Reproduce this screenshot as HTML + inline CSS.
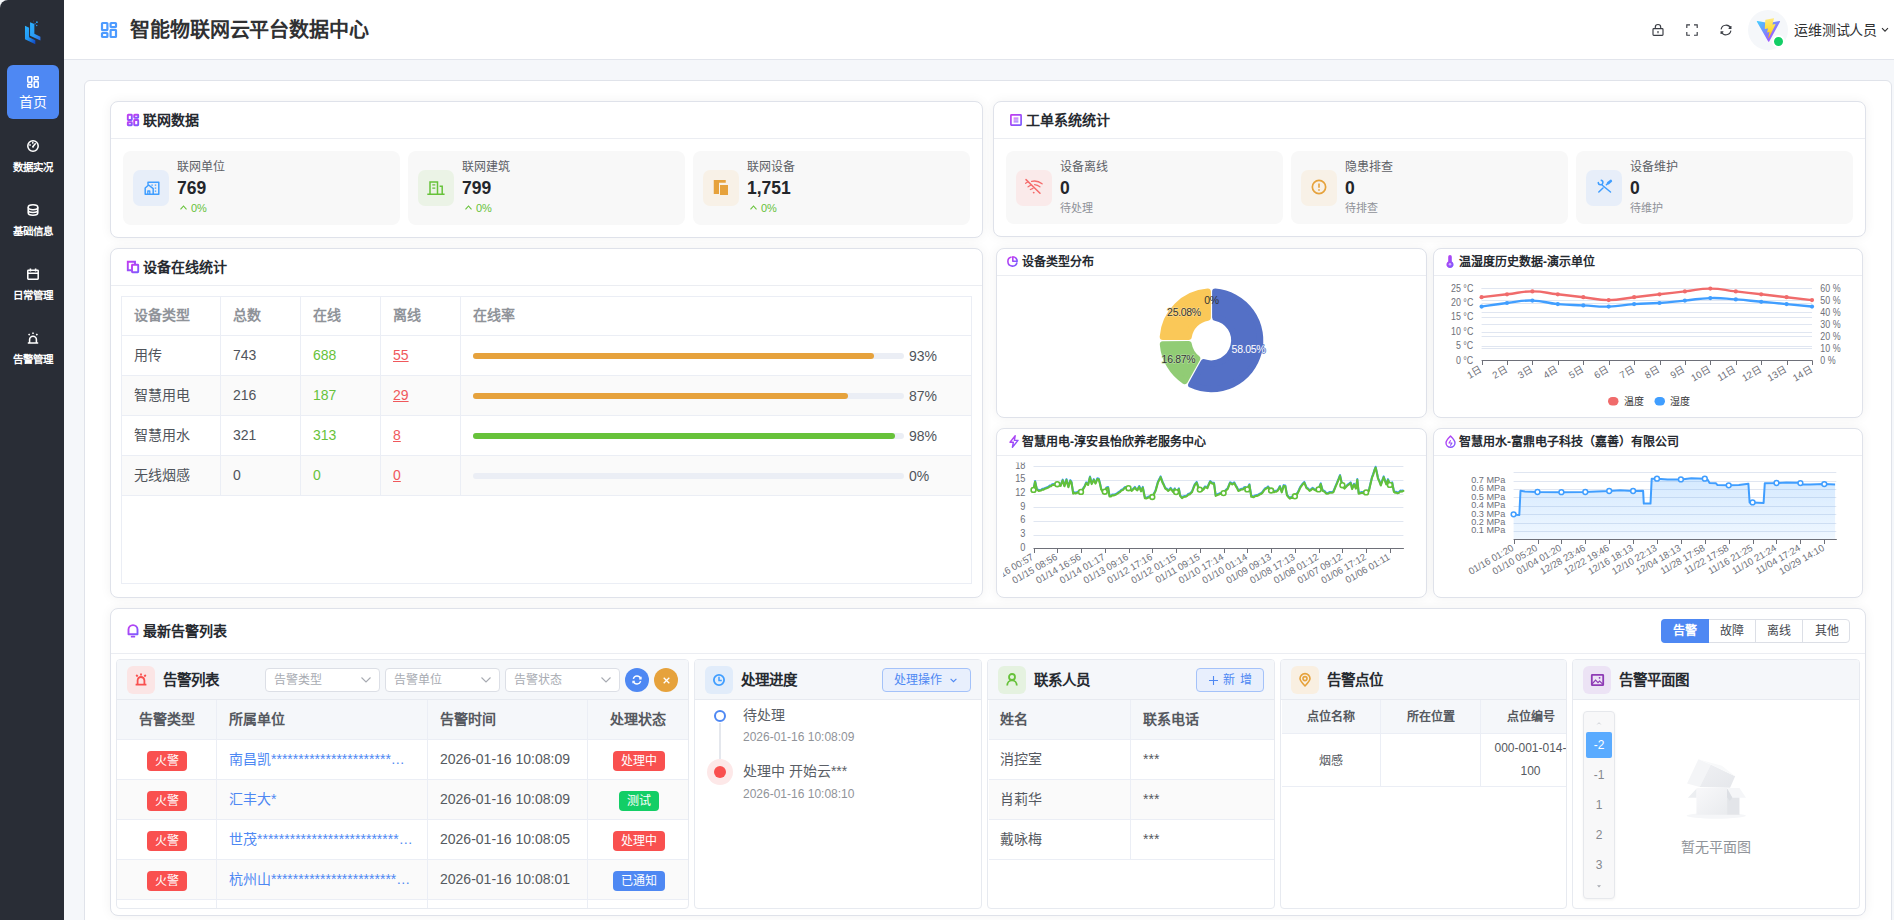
<!DOCTYPE html>
<html lang="zh-CN">
<head>
<meta charset="utf-8">
<title>智能物联网云平台数据中心</title>
<style>
*{box-sizing:border-box;margin:0;padding:0}
html,body{width:1894px;height:920px;overflow:hidden}
body{font-family:"Liberation Sans",sans-serif;background:#f5f7fa;position:relative;color:#303133;font-size:14px;line-height:1}
.a{position:absolute}
svg{display:block;overflow:visible}
/* sidebar */
#side{left:0;top:0;width:64px;height:920px;background:#292d36;border-top-left-radius:8px}
.mi{left:7px;width:52px;height:54px;border-radius:6px;color:#fff;text-align:center}
.mi svg{position:absolute;left:19px;top:9px}
.mi span{position:absolute;left:-6px;width:64px;top:29px;font-size:10.5px;font-weight:700;letter-spacing:-.1px;white-space:nowrap}
.mi.on{background:#4e88f3}
.mi.on span{font-size:14px;font-weight:400;top:29px;letter-spacing:0}
/* header */
#hd{left:64px;top:0;width:1830px;height:60px;background:#fff;border-bottom:1px solid #e2e5ec}
#ttl{left:66px;top:20px;font-size:20px;font-weight:700;color:#303133;white-space:nowrap;letter-spacing:-.1px}
/* outer */
#outer{left:84px;top:80px;width:1808px;height:860px;background:#fff;border:1px solid #e0e3ea;border-radius:6px}
.card{overflow:hidden;background:#fff;border:1px solid #dfe2ea;border-radius:8px;box-shadow:0 0 12px rgba(0,0,0,.055)}
.ch{left:0;top:0;right:0;border-bottom:1px solid #ebedf2}
.ct{font-weight:700;color:#262a30;white-space:nowrap}
/* stat boxes */
.sb{top:49px;width:277px;height:73px;background:#f8f8f8;border-radius:8px}
.sb .ic{left:10px;top:19px;width:36px;height:36px;border-radius:7px}
.sb .l1{left:54px;top:10px;font-size:12px;color:#5d6066;white-space:nowrap}
.sb .l2{left:54px;top:28.5px;font-size:17.5px;font-weight:700;color:#23262b;white-space:nowrap}
.sb .l3{left:54px;top:52px;font-size:11px;color:#8f9299;white-space:nowrap}
.sb .l3.g{color:#67c23a}
/* table1 */
#t1{left:10px;top:47px;width:851px;height:288px;border:1px solid #ebeef5}
#t1 .r{left:0;width:849px;height:40px;border-bottom:1px solid #ebeef5}
#t1 .r.s{background:#fafafa}
#t1 .c{top:0;height:39px;line-height:39px;padding-left:12px;font-size:14px;color:#50545b;border-right:1px solid #ebeef5;white-space:nowrap}
#t1 .h .c{color:#8f9399;font-weight:700}
#t1 .g{color:#67c23a}
#t1 .d{color:#f0585c;text-decoration:underline}
.pb{left:12px;top:17px;width:431px;height:6px;border-radius:3px;background:#ebeef5}
.pb i{position:absolute;left:0;top:0;height:6px;border-radius:3px}
.pt{left:448px;top:1px;font-size:14px;color:#50545b}
/* bottom panels */
.pn{top:51px;height:250px;background:#fff;border:1px solid #e7eaf0;border-radius:4px;overflow:hidden}
.ph{left:0;top:0;right:0;height:40px;background:#f5f7fa;border-bottom:1px solid #e7eaf0}
.ph .ic{left:10px;top:6px;width:28px;height:28px;border-radius:6px}
.ph .t{left:46px;top:13px;font-size:14.5px;font-weight:700;color:#262a30;white-space:nowrap}
.th{background:#f5f7fa;font-weight:700;color:#4a4e55}
.tc{position:absolute;height:40px;line-height:39px;border-right:1px solid #ebeef5;border-bottom:1px solid #ebeef5;font-size:14px;color:#555960;white-space:nowrap;overflow:hidden}
.tag{position:relative;top:.7px;display:inline-block;height:20px;line-height:20px;padding:0 7px;border-radius:4px;color:#fff;font-size:12px;vertical-align:middle}
.sel{top:8px;width:115px;height:24px;background:#fff;border:1px solid #dcdfe6;border-radius:4px;font-size:12px;color:#a8abb2;line-height:22px;padding-left:8px}
</style>
</head>
<body>
<div id="side" class="a">
<svg class="a" style="left:23.820px;top:20.100px" width="17.210" height="25.040" viewBox="200 140 440 640">
<defs><linearGradient id="lg1" x1="0" y1="0" x2="1" y2="1"><stop offset="0" stop-color="#2ab2ff"/><stop offset=".5" stop-color="#2196f3"/><stop offset="1" stop-color="#0f3fbc"/></linearGradient>
<linearGradient id="lg2" x1="0" y1="0" x2="1" y2="1"><stop offset="0" stop-color="#2bb0ff"/><stop offset=".55" stop-color="#2a9cf6"/><stop offset="1" stop-color="#2f6fe8"/></linearGradient></defs>
<path d="M225 285 L330 335 V580 L490 660 V760 L225 630 Z" fill="url(#lg1)"/>
<path d="M355 200 L465 245 V490 L620 570 V665 L355 545 Z" fill="url(#lg2)"/>
<circle cx="445" cy="165" r="12" fill="#2470d0"/><circle cx="530" cy="195" r="22" fill="#2aa8ff"/><circle cx="485" cy="235" r="17" fill="#2a78e0"/><circle cx="525" cy="280" r="18" fill="#2b9cf5"/>
</svg>
<div class="a mi on" style="top:65px"><svg width="12" height="12" viewBox="0 0 12 12" style="left:20px;top:11px" fill="none" stroke="#fff" stroke-width="1.55"><rect x=".8" y=".8" width="4" height="5.4" rx=".6"/><rect x=".8" y="8.3" width="4" height="2.9" rx=".6"/><rect x="7.2" y=".8" width="4" height="2.9" rx=".6"/><rect x="7.2" y="5.8" width="4" height="5.4" rx=".6"/></svg><span style="top:30px">首页</span></div>
<div class="a mi" style="top:129px"><svg width="12" height="12" viewBox="0 0 12 12" style="left:20px;top:11px" fill="none" stroke="#fff" stroke-width="1.55"><circle cx="6" cy="6" r="5.2"/><path d="M6 6.5 L8.3 3.8 M2.8 5 h.5 M5.8 2.6 v.5" stroke-linecap="round"/><circle cx="6" cy="6.8" r=".9" fill="#fff" stroke="none"/></svg><span style="top:33px">数据实况</span></div>
<div class="a mi" style="top:193px"><svg width="12" height="12" viewBox="0 0 12 12" style="left:20px;top:11px" fill="none" stroke="#fff" stroke-width="1.55"><ellipse cx="6" cy="3.2" rx="4.8" ry="2.5"/><path d="M1.2 3.2 v5.6 c0 1.4 2.1 2.5 4.8 2.5 s4.8-1.1 4.8-2.5 v-5.6 M1.2 6 c0 1.4 2.1 2.5 4.8 2.5 s4.8-1.1 4.8-2.5"/></svg><span style="top:33px">基础信息</span></div>
<div class="a mi" style="top:257px"><svg width="12" height="12" viewBox="0 0 12 12" style="left:20px;top:11px" fill="none" stroke="#fff" stroke-width="1.55"><rect x=".8" y="2.2" width="10.4" height="9" rx=".6"/><path d="M.8 5.2 h10.4 M3.4 .6 v2.8 M8.6 .6 v2.8"/></svg><span style="top:33px">日常管理</span></div>
<div class="a mi" style="top:321px"><svg width="12" height="12" viewBox="0 0 12 12" style="left:20px;top:11px" fill="none" stroke="#fff" stroke-width="1.55"><path d="M2.6 10.6 v-3 a3.4 3.4 0 0 1 6.8 0 v3 M.8 10.9 h10.4 M6 .5 v1.6 M1.6 2 l1.1 1.1 M10.4 2 l-1.1 1.1"/></svg><span style="top:33px">告警管理</span></div>
</div>

<div id="hd" class="a">
<svg class="a" style="left:37px;top:22px" width="16" height="16" viewBox="0 0 16 16" fill="none" stroke="#4d9bff" stroke-width="2.2"><rect x="1" y="1" width="5.4" height="7.2" rx=".6"/><rect x="1" y="11" width="5.4" height="4" rx=".6"/><rect x="9.6" y="1" width="5.4" height="4" rx=".6"/><rect x="9.6" y="7.8" width="5.4" height="7.2" rx=".6"/></svg>
<div id="ttl" class="a">智能物联网云平台数据中心</div>
<svg class="a" style="left:1588px;top:24px" width="12" height="12" viewBox="0 0 12 12" fill="none" stroke="#3a3d44" stroke-width="1.15"><rect x="1" y="4.6" width="10" height="6.8" rx=".8"/><path d="M3.3 4.6 v-1.4 a2.7 2.7 0 0 1 5.4 0 v1.4 M6 7 v2.2"/></svg>
<svg class="a" style="left:1622px;top:24px" width="12" height="12" viewBox="0 0 12 12" fill="none" stroke="#3a3d44" stroke-width="1.15"><path d="M.8 4 v-3.2 h3.2 M8 .8 h3.2 v3.2 M11.2 8 v3.2 h-3.2 M4 11.2 h-3.2 v-3.2"/></svg>
<svg class="a" style="left:1656px;top:24px" width="12" height="12" viewBox="0 0 12 12" fill="none" stroke="#3a3d44" stroke-width="1.15"><path d="M1.100 5.300 A5 5 0 0 1 10.600 4.200 M10.900 6.700 A5 5 0 0 1 1.400 7.800 M10.900 2 v2.300 h-2.300 M1.100 10 v-2.300 h2.300"/></svg>
<div class="a" style="left:1684px;top:10px;width:40px;height:40px;border-radius:20px;background:#f5f7fa"></div>
<svg class="a" style="left:1692px;top:18px" width="25" height="25" viewBox="0 0 25 25">
<defs><linearGradient id="vg1" x1="0" y1="0" x2="1" y2="1"><stop offset="0" stop-color="#41d1ff"/><stop offset="1" stop-color="#bd34fe"/></linearGradient>
<linearGradient id="vg2" x1="0" y1="0" x2="0" y2="1"><stop offset="0" stop-color="#ffea83"/><stop offset=".6" stop-color="#ffdd35"/><stop offset="1" stop-color="#ffa800"/></linearGradient></defs>
<path d="M24 3.8 L13.2 23.4 a.6.6 0 0 1-1 0 L.9 3.8 a.6.6 0 0 1 .6-.9 L12.5 4.9 L23.4 2.9 a.6.6 0 0 1 .6.9z" fill="url(#vg1)"/>
<path d="M17.6.2 L9.5 1.8 a.3.3 0 0 0-.2.3 l-.5 8.500 a.3.3 0 0 0 .4.3 l2.300-.5 a.3.3 0 0 1 .4.4 l-.7 3.300 a.3.3 0 0 0 .4.4 l1.400-.4 a.3.3 0 0 1 .4.4 l-1.100 5.200 c-.1.300.400.500.500.200 l.1-.2 6.600-13.200 a.3.3 0 0 0-.3-.4 l-2.400.5 a.3.3 0 0 1-.3-.4 L18 .6 a.3.3 0 0 0-.4-.4z" fill="url(#vg2)"/>
</svg>
<div class="a" style="left:1707.500px;top:34.500px;width:13px;height:13px;border-radius:7px;background:#13ce66;border:2px solid #fff"></div>
<div class="a" style="left:1730px;top:23px;font-size:14px;color:#303133;white-space:nowrap;letter-spacing:-.15px">运维测试人员</div>
<svg class="a" style="left:1817px;top:27px" width="8" height="6" viewBox="0 0 8 6" fill="none" stroke="#303133" stroke-width="1.1"><path d="M1 1.2 l3 3 l3-3"/></svg>
</div>

<div id="outer" class="a"></div>
<!-- card: 联网数据 -->
<div class="a card" style="left:110px;top:101px;width:873px;height:137px">
<div class="a ch" style="height:37px"></div>
<svg class="a" style="left:16px;top:12px" width="12" height="12" viewBox="0 0 12 12" fill="none" stroke-width="1.900"><defs><linearGradient id="pg" x1="0" y1="0" x2="1" y2="1"><stop offset="0" stop-color="#c33cf0"/><stop offset="1" stop-color="#7a5cff"/></linearGradient></defs><g stroke="url(#pg)"><rect x=".8" y=".8" width="4" height="5.2" rx=".5"/><rect x=".8" y="8.2" width="4" height="3" rx=".5"/><rect x="7.2" y=".8" width="4" height="3" rx=".5"/><rect x="7.2" y="6" width="4" height="5.2" rx=".5"/></g></svg>
<div class="a ct" style="left:32px;top:11px;font-size:14px">联网数据</div>
<div class="a sb" style="height:74px;left:12px"><div class="a ic" style="background:#e7eef9"></div>
<svg class="a" style="left:20.500px;top:29.500px" width="16" height="14" viewBox="0 0 16 14" fill="none" stroke="#409eff" stroke-width="1.500" stroke-linejoin="round"><path d="M4 3.800 V1.200 H14.800 V13.200 H1.200 V7 L4.600 4 L9.200 7.600 V13.200"/><path d="M3.800 13.200 V10 h2 V13.200" stroke-width="1.300"/><path d="M7.400 4.200 h1.400 M10.800 4.200 h1.400 M10.800 7.200 h1.400 M10.800 10.200 h1.400" stroke-width="1.200"/></svg>
<div class="a l1">联网单位</div><div class="a l2">769</div><div class="a l3 g"><svg class="a" style="left:3px;top:2px" width="7" height="5" viewBox="0 0 7 5" fill="none" stroke="#67c23a" stroke-width="1.1"><path d="M.5 4.300 l3-3.300 l3 3.300"/></svg><span style="margin-left:14px">0%</span></div></div>
<div class="a sb" style="height:74px;left:297px"><div class="a ic" style="background:#ebf3e6"></div>
<svg class="a" style="left:19px;top:29.500px" width="18" height="14" viewBox="0 0 18 14" fill="none" stroke="#67c23a" stroke-width="1.500"><path d="M3 13 V1 h7.500 V13 M.3 13.200 H17.600 M12.600 5.200 h2.600 V13"/><path d="M5.300 3.900 h3 M5.300 7.100 h3" stroke-width="1.300"/></svg>
<div class="a l1">联网建筑</div><div class="a l2">799</div><div class="a l3 g"><svg class="a" style="left:3px;top:2px" width="7" height="5" viewBox="0 0 7 5" fill="none" stroke="#67c23a" stroke-width="1.1"><path d="M.5 4.300 l3-3.300 l3 3.300"/></svg><span style="margin-left:14px">0%</span></div></div>
<div class="a sb" style="height:74px;left:582px"><div class="a ic" style="background:#f8f1e7"></div>
<svg class="a" style="left:20px;top:29px" width="16" height="16" viewBox="0 0 16 16" fill="#e6a23c"><path d="M.750 0 h12 v2.750 h-6.750 v11.250 h-5.250 z"/><rect x="7" y="5" width="8" height="10"/></svg>
<div class="a l1">联网设备</div><div class="a l2">1,751</div><div class="a l3 g"><svg class="a" style="left:3px;top:2px" width="7" height="5" viewBox="0 0 7 5" fill="none" stroke="#67c23a" stroke-width="1.1"><path d="M.5 4.300 l3-3.300 l3 3.300"/></svg><span style="margin-left:14px">0%</span></div></div>
</div>
<!-- card: 工单系统统计 -->
<div class="a card" style="left:993px;top:101px;width:873px;height:136px">
<div class="a ch" style="height:37px"></div>
<svg class="a" style="left:16px;top:12px" width="12" height="12" viewBox="0 0 12 12" fill="none" stroke="url(#pg)" stroke-width="1.700"><rect x=".9" y=".9" width="10.200" height="10.200" rx=".5"/><path d="M3.600 4.100 h4.800 M3.600 6 h4.800 M3.600 7.900 h4.800" stroke-width="1"/></svg>
<div class="a ct" style="left:32px;top:11px;font-size:14px">工单系统统计</div>
<div class="a sb" style="left:12px"><div class="a ic" style="background:#faeaea"></div>
<svg class="a" style="left:19px;top:28px" width="18" height="15" viewBox="0 0 18 15" fill="none" stroke="#f56c6c" stroke-width="1.300" stroke-linecap="round"><path d="M1 .6 L15 14.300" stroke-width="1.500"/><path d="M6.600 2.400 Q12.300 1 17.100 4.800 M.6 4.300 L2.600 3 M9.600 5.600 Q12.600 5.900 14.900 7.800 M3.100 7.800 L5.600 6.300 M5.400 10.500 L8 9.300"/><circle cx="8.700" cy="13.600" r=".95" fill="#f56c6c" stroke="none"/></svg>
<div class="a l1">设备离线</div><div class="a l2">0</div><div class="a l3">待处理</div></div>
<div class="a sb" style="left:297px"><div class="a ic" style="background:#f8f1e7"></div>
<svg class="a" style="left:19.750px;top:27.500px" width="16" height="16" viewBox="0 0 16 16" fill="none" stroke="#e6a23c" stroke-width="1.700"><circle cx="8" cy="8" r="6.650"/><path d="M8 4.600 v4.200 M8 10.300 v1.500" stroke-width="1.600"/></svg>
<div class="a l1">隐患排查</div><div class="a l2">0</div><div class="a l3">待排查</div></div>
<div class="a sb" style="left:582px"><div class="a ic" style="background:#e7eef9"></div>
<svg class="a" style="left:20.500px;top:28.500px" width="15" height="14" viewBox="0 0 15 14" fill="none" stroke="#409eff" stroke-width="1.500" stroke-linecap="round"><path d="M5 5 L13.500 12 M1.800 12 L6 8 M9.400 4.700 L11 3.300"/><path d="M11.200 3.100 L13.800 1" stroke-width="2.700"/><path d="M1.300 2.400 a2.300 2.300 0 1 0 2.900-2.200" /></svg>
<div class="a l1">设备维护</div><div class="a l2">0</div><div class="a l3">待维护</div></div>
</div>
<!-- card: 设备在线统计 -->
<div class="a card" style="left:110px;top:248px;width:873px;height:350px">
<div class="a ch" style="height:37px"></div>
<svg class="a" style="left:16px;top:12px" width="12" height="12" viewBox="0 0 12 12" fill="none" stroke="url(#pg)" stroke-width="1.900"><path d="M4.500 9.200 h-3.700 v-8.400 h7.200 v2.600"/><rect x="5" y="3.800" width="6.200" height="7.400" rx=".5"/></svg>
<div class="a ct" style="left:32px;top:11px;font-size:14px">设备在线统计</div>
<div id="t1" class="a">
<div class="a r h" style="top:0;height:39px"><div class="a c" style="left:0;width:99px;height:38px;line-height:36px">设备类型</div><div class="a c" style="left:99px;width:80px;height:38px;line-height:36px">总数</div><div class="a c" style="left:179px;width:80px;height:38px;line-height:36px">在线</div><div class="a c" style="left:259px;width:80px;height:38px;line-height:36px">离线</div><div class="a c" style="left:339px;width:510px;border-right:0;height:38px;line-height:36px">在线率</div></div>
<div class="a r" style="top:39px"><div class="a c" style="left:0;width:99px">用传</div><div class="a c" style="left:99px;width:80px">743</div><div class="a c g" style="left:179px;width:80px">688</div><div class="a c d" style="left:259px;width:80px">55</div><div class="a c" style="left:339px;width:510px;border-right:0;padding:0"><div class="a pb"><i style="width:401px;background:#e6a23c"></i></div><div class="a pt">93%</div></div></div>
<div class="a r s" style="top:79px"><div class="a c" style="left:0;width:99px">智慧用电</div><div class="a c" style="left:99px;width:80px">216</div><div class="a c g" style="left:179px;width:80px">187</div><div class="a c d" style="left:259px;width:80px">29</div><div class="a c" style="left:339px;width:510px;border-right:0;padding:0"><div class="a pb"><i style="width:375px;background:#e6a23c"></i></div><div class="a pt">87%</div></div></div>
<div class="a r" style="top:119px"><div class="a c" style="left:0;width:99px">智慧用水</div><div class="a c" style="left:99px;width:80px">321</div><div class="a c g" style="left:179px;width:80px">313</div><div class="a c d" style="left:259px;width:80px">8</div><div class="a c" style="left:339px;width:510px;border-right:0;padding:0"><div class="a pb"><i style="width:422px;background:#67c23a"></i></div><div class="a pt">98%</div></div></div>
<div class="a r s" style="top:159px"><div class="a c" style="left:0;width:99px">无线烟感</div><div class="a c" style="left:99px;width:80px">0</div><div class="a c g" style="left:179px;width:80px">0</div><div class="a c d" style="left:259px;width:80px">0</div><div class="a c" style="left:339px;width:510px;border-right:0;padding:0"><div class="a pb"></div><div class="a pt">0%</div></div></div>
</div>
</div>
<div class="a card" style="left:996px;top:248px;width:431px;height:170px"><div class="a ch" style="height:27px"></div><svg class="a" style="left:10.300px;top:6.500px" width="11" height="11" viewBox="0 0 11 11" fill="none" stroke="url(#pg)" stroke-width="1.600"><path d="M10 6.400 a4.600 4.600 0 1 1 -5.400-5.400"/><path d="M5.800 .8 a4.400 4.400 0 0 1 4.400 4.400 h-4.400 z" stroke-linejoin="round"/></svg><div class="a ct" style="left:25px;top:6.500px;font-size:12px">设备类型分布</div><svg class="a" style="left:-1px;top:-1px" width="431" height="170" viewBox="996 248 431 170" font-family="Liberation Sans, sans-serif"><path d="M1215.3 291.8 A48.7 48.7 0 1 1 1191.3 384.7 L1203.7 362.3 A23.2 23.2 0 1 0 1215.3 317.5 Z" fill="#5470c6" stroke="#5470c6" stroke-width="6.4" stroke-linejoin="round"/><path d="M1184.7 381 A48.7 48.7 0 0 1 1163 344.4 L1188.6 344.3 A23.2 23.2 0 0 0 1197.1 358.6 Z" fill="#91cc75" stroke="#91cc75" stroke-width="6.4" stroke-linejoin="round"/><path d="M1162.9 336.8 A48.7 48.7 0 0 1 1207.7 291.8 L1207.7 317.5 A23.2 23.2 0 0 0 1188.6 336.7 Z" fill="#fac858" stroke="#fac858" stroke-width="6.4" stroke-linejoin="round"/><g font-size="10.5" text-anchor="middle" letter-spacing="-.3"><text x="1248.500" y="352.800" fill="#fff" stroke="#5470c6" stroke-width="1.600" paint-order="stroke" stroke-linejoin="round">58.05%</text><text x="1178.500" y="362.600" fill="#333" stroke="#b7e0a5" stroke-width="1.200" paint-order="stroke">16.87%</text><text x="1184" y="315.800" fill="#333" stroke="#fcdc92" stroke-width="1.200" paint-order="stroke">25.08%</text><text x="1211.500" y="303.800" fill="#333">0%</text></g></svg></div>
<div class="a card" style="left:1433px;top:248px;width:430px;height:170px"><div class="a ch" style="height:27px"></div><svg class="a" style="left:12px;top:6px" width="8" height="13" viewBox="0 0 8 13"><path d="M2.200 1.800 a1.800 1.800 0 0 1 3.600 0 v4.600 a3.600 3.600 0 1 1 -3.600 0 z" fill="url(#pg)"/><circle cx="4" cy="9.300" r="1.300" fill="#fff" opacity=".55"/></svg><div class="a ct" style="left:25px;top:6.500px;font-size:12px">温湿度历史数据-演示单位</div><svg class="a" style="left:-1px;top:-1px" width="430" height="170" viewBox="1433 248 430 170" font-family="Liberation Sans, sans-serif"><path d="M1481.6 288.5 H1812" stroke="#e0e6f1" stroke-width="1"/><path d="M1481.6 288.5 H1812" stroke="#e0e6f1" stroke-width="1"/><path d="M1481.6 300.5 H1812" stroke="#e0e6f1" stroke-width="1"/><path d="M1481.6 303.5 H1812" stroke="#e0e6f1" stroke-width="1"/><path d="M1481.6 312.5 H1812" stroke="#e0e6f1" stroke-width="1"/><path d="M1481.6 317.5 H1812" stroke="#e0e6f1" stroke-width="1"/><path d="M1481.6 324.5 H1812" stroke="#e0e6f1" stroke-width="1"/><path d="M1481.6 332.5 H1812" stroke="#e0e6f1" stroke-width="1"/><path d="M1481.6 336.5 H1812" stroke="#e0e6f1" stroke-width="1"/><path d="M1481.6 346.5 H1812" stroke="#e0e6f1" stroke-width="1"/><path d="M1481.6 348.5 H1812" stroke="#e0e6f1" stroke-width="1"/><path d="M1481.6 360.5 H1812.5" stroke="#6e7079" stroke-width="1"/><g stroke="#6e7079" stroke-width="1"><path d="M1482.5 360.5 v4.5"/><path d="M1507.5 360.5 v4.5"/><path d="M1532.5 360.5 v4.5"/><path d="M1558.5 360.5 v4.5"/><path d="M1583.5 360.5 v4.5"/><path d="M1609.5 360.5 v4.5"/><path d="M1634.5 360.5 v4.5"/><path d="M1660.5 360.5 v4.5"/><path d="M1685.5 360.5 v4.5"/><path d="M1710.5 360.5 v4.5"/><path d="M1736.5 360.5 v4.5"/><path d="M1761.5 360.5 v4.5"/><path d="M1787.5 360.5 v4.5"/><path d="M1812.5 360.5 v4.5"/></g><g font-size="10" fill="#6e7079" text-anchor="end"><text transform="translate(1473.300 363.5) scale(.89 1)">0 °C</text><text transform="translate(1473.300 349.1) scale(.89 1)">5 °C</text><text transform="translate(1473.300 334.7) scale(.89 1)">10 °C</text><text transform="translate(1473.300 320.3) scale(.89 1)">15 °C</text><text transform="translate(1473.300 305.9) scale(.89 1)">20 °C</text><text transform="translate(1473.300 291.5) scale(.89 1)">25 °C</text></g><g font-size="10" fill="#6e7079" text-anchor="start"><text transform="translate(1820.300 363.5) scale(.89 1)">0 %</text><text transform="translate(1820.300 351.5) scale(.89 1)">10 %</text><text transform="translate(1820.300 339.5) scale(.89 1)">20 %</text><text transform="translate(1820.300 327.5) scale(.89 1)">30 %</text><text transform="translate(1820.300 315.5) scale(.89 1)">40 %</text><text transform="translate(1820.300 303.5) scale(.89 1)">50 %</text><text transform="translate(1820.300 291.5) scale(.89 1)">60 %</text></g><g font-size="9.7" fill="#6e7079" text-anchor="end"><text transform="translate(1482.8 371.4) rotate(-30)">1日</text><text transform="translate(1508.2 371.4) rotate(-30)">2日</text><text transform="translate(1533.6 371.4) rotate(-30)">3日</text><text transform="translate(1559 371.4) rotate(-30)">4日</text><text transform="translate(1584.5 371.4) rotate(-30)">5日</text><text transform="translate(1609.9 371.4) rotate(-30)">6日</text><text transform="translate(1635.3 371.4) rotate(-30)">7日</text><text transform="translate(1660.7 371.4) rotate(-30)">8日</text><text transform="translate(1686.1 371.4) rotate(-30)">9日</text><text transform="translate(1711.5 371.4) rotate(-30)">10日</text><text transform="translate(1737 371.4) rotate(-30)">11日</text><text transform="translate(1762.4 371.4) rotate(-30)">12日</text><text transform="translate(1787.8 371.4) rotate(-30)">13日</text><text transform="translate(1813.2 371.4) rotate(-30)">14日</text></g><path d="M1481.6 297.2 C1488 296.5 1494.3 295.8 1507 294.3 C1519.7 292.9 1519.7 291.4 1532.4 291.4 C1545.1 291.4 1545.1 292.9 1557.8 294.3 C1570.6 295.8 1570.6 295.8 1583.3 297.2 C1596 298.6 1596 300.1 1608.7 300.1 C1621.4 300.1 1621.4 298.6 1634.1 297.2 C1646.8 295.8 1646.8 295.8 1659.5 294.3 C1672.2 292.9 1672.2 292.9 1684.9 291.4 C1697.6 290 1697.6 288.6 1710.3 288.6 C1723 288.6 1723 290 1735.8 291.4 C1748.5 292.9 1748.5 292.9 1761.2 294.3 C1773.9 295.8 1773.9 295.8 1786.6 297.2 C1799.3 298.6 1805.6 299.4 1812 300.1" fill="none" stroke="#f06b6b" stroke-width="2.400" stroke-linecap="round"/><g fill="#f06b6b"><circle cx="1481.6" cy="297.2" r="2.100"/><circle cx="1507" cy="294.3" r="2.100"/><circle cx="1532.4" cy="291.4" r="2.100"/><circle cx="1557.8" cy="294.3" r="2.100"/><circle cx="1583.3" cy="297.2" r="2.100"/><circle cx="1608.7" cy="300.1" r="2.100"/><circle cx="1634.1" cy="297.2" r="2.100"/><circle cx="1659.5" cy="294.3" r="2.100"/><circle cx="1684.9" cy="291.4" r="2.100"/><circle cx="1710.3" cy="288.6" r="2.100"/><circle cx="1735.8" cy="291.4" r="2.100"/><circle cx="1761.2" cy="294.3" r="2.100"/><circle cx="1786.6" cy="297.2" r="2.100"/><circle cx="1812" cy="300.1" r="2.100"/></g><path d="M1481.6 306.6 C1488 305.7 1494.3 304.5 1507 303 C1519.7 301.5 1519.7 300.2 1532.4 300.6 C1545.1 300.9 1545.1 302.9 1557.8 304.1 C1570.6 305.3 1570.6 304.8 1583.3 305.4 C1596 306 1596 306.9 1608.7 306.6 C1621.4 306.2 1621.4 305 1634.1 304.1 C1646.8 303.2 1646.8 303.9 1659.5 303 C1672.2 302.1 1672.2 301.8 1684.9 300.6 C1697.6 299.4 1697.6 298.4 1710.3 298.1 C1723 297.8 1723 298.5 1735.8 299.4 C1748.5 300.2 1748.5 300.6 1761.2 301.8 C1773.9 302.9 1773.9 302.9 1786.6 304.1 C1799.3 305.3 1805.6 305.9 1812 306.6" fill="none" stroke="#409eff" stroke-width="2.400" stroke-linecap="round"/><g fill="#409eff"><circle cx="1481.6" cy="306.6" r="2.100"/><circle cx="1507" cy="303" r="2.100"/><circle cx="1532.4" cy="300.6" r="2.100"/><circle cx="1557.8" cy="304.1" r="2.100"/><circle cx="1583.3" cy="305.4" r="2.100"/><circle cx="1608.7" cy="306.6" r="2.100"/><circle cx="1634.1" cy="304.1" r="2.100"/><circle cx="1659.5" cy="303" r="2.100"/><circle cx="1684.9" cy="300.6" r="2.100"/><circle cx="1710.3" cy="298.1" r="2.100"/><circle cx="1735.8" cy="299.4" r="2.100"/><circle cx="1761.2" cy="301.8" r="2.100"/><circle cx="1786.6" cy="304.1" r="2.100"/><circle cx="1812" cy="306.6" r="2.100"/></g><rect x="1608" y="397" width="10.500" height="8.400" rx="4.200" fill="#f06b6b"/><text x="1623.500" y="404.800" font-size="10" fill="#333">温度</text><rect x="1654.500" y="397" width="10.500" height="8.400" rx="4.200" fill="#409eff"/><text x="1669.500" y="404.800" font-size="10" fill="#333">湿度</text></svg></div>
<div class="a card" style="left:996px;top:428px;width:431px;height:170px"><div class="a ch" style="height:27px"></div><svg class="a" style="left:12px;top:6px" width="10" height="13" viewBox="0 0 10 13" fill="none" stroke="url(#pg)" stroke-width="1.400" stroke-linejoin="round"><path d="M6.200 .8 L1 7.200 h3.400 l-1 5 l5.600-6.800 h-3.600 z"/></svg><div class="a ct" style="left:25px;top:6.500px;font-size:12px">智慧用电-淳安县怡欣养老服务中心</div><svg class="a" style="left:-1px;top:-1px" width="431" height="170" viewBox="996 428 431 170" font-family="Liberation Sans, sans-serif"><defs><clipPath id="ec"><rect x="1003.2" y="462.6" width="420" height="130"/></clipPath></defs><g clip-path="url(#ec)"><path d="M1033.5 535.5 H1403.4" stroke="#e0e6f1" stroke-width="1"/><path d="M1033.5 521.5 H1403.4" stroke="#e0e6f1" stroke-width="1"/><path d="M1033.5 507.5 H1403.4" stroke="#e0e6f1" stroke-width="1"/><path d="M1033.5 494.5 H1403.4" stroke="#e0e6f1" stroke-width="1"/><path d="M1033.5 480.5 H1403.4" stroke="#e0e6f1" stroke-width="1"/><path d="M1033.5 466.5 H1403.4" stroke="#e0e6f1" stroke-width="1"/><path d="M1033.5 548.5 H1403.9" stroke="#6e7079" stroke-width="1"/><g stroke="#6e7079" stroke-width="1"><path d="M1034.5 548.5 v4.5"/><path d="M1057.5 548.5 v4.5"/><path d="M1081.5 548.5 v4.5"/><path d="M1105.5 548.5 v4.5"/><path d="M1129.5 548.5 v4.5"/><path d="M1152.5 548.5 v4.5"/><path d="M1176.5 548.5 v4.5"/><path d="M1200.5 548.5 v4.5"/><path d="M1224.5 548.5 v4.5"/><path d="M1247.5 548.5 v4.5"/><path d="M1271.5 548.5 v4.5"/><path d="M1295.5 548.5 v4.5"/><path d="M1319.5 548.5 v4.5"/><path d="M1342.5 548.5 v4.5"/><path d="M1366.5 548.5 v4.5"/><path d="M1390.5 548.5 v4.5"/></g><g font-size="10.3" fill="#6e7079" text-anchor="end"><text transform="translate(1025.500 550.7) scale(.9 1)">0</text><text transform="translate(1025.500 537) scale(.9 1)">3</text><text transform="translate(1025.500 523.4) scale(.9 1)">6</text><text transform="translate(1025.500 509.7) scale(.9 1)">9</text><text transform="translate(1025.500 496) scale(.9 1)">12</text><text transform="translate(1025.500 482.3) scale(.9 1)">15</text><text transform="translate(1025.500 468.7) scale(.9 1)">18</text></g><g font-size="9.6" fill="#6e7079" text-anchor="end" letter-spacing="-.05"><text transform="translate(1034.2 558.9) rotate(-30)">01/16 00:57</text><text transform="translate(1058 558.9) rotate(-30)">01/15 08:56</text><text transform="translate(1081.7 558.9) rotate(-30)">01/14 16:56</text><text transform="translate(1105.5 558.9) rotate(-30)">01/14 01:17</text><text transform="translate(1129.2 558.9) rotate(-30)">01/13 09:16</text><text transform="translate(1153 558.9) rotate(-30)">01/12 17:16</text><text transform="translate(1176.8 558.9) rotate(-30)">01/12 01:15</text><text transform="translate(1200.5 558.9) rotate(-30)">01/11 09:15</text><text transform="translate(1224.3 558.9) rotate(-30)">01/10 17:14</text><text transform="translate(1248 558.9) rotate(-30)">01/10 01:14</text><text transform="translate(1271.8 558.9) rotate(-30)">01/09 09:13</text><text transform="translate(1295.6 558.9) rotate(-30)">01/08 17:13</text><text transform="translate(1319.3 558.9) rotate(-30)">01/08 01:12</text><text transform="translate(1343.1 558.9) rotate(-30)">01/07 09:12</text><text transform="translate(1366.8 558.9) rotate(-30)">01/06 17:12</text><text transform="translate(1390.6 558.9) rotate(-30)">01/06 01:11</text></g><path d="M1033.5 490 L1035.1 481.8 L1036.8 489.5 L1038.7 490.9 L1039.9 490.7 L1041.1 490.5 L1042.3 489.6 L1043.5 489.8 L1044.6 488.9 L1045.8 488.6 L1047.1 488 L1048.4 487.6 L1049.7 486.4 L1051 486.2 L1052.2 485 L1053.6 484.8 L1054.9 485 L1056.2 484.7 L1057.5 484.1 L1059 485 L1060.6 485.9 L1062.7 480.4 L1064.4 486.3 L1066.5 479.9 L1068.4 487.2 L1070.3 480.9 L1071.5 482.7 L1073.2 493.6 L1074.3 493 L1075.5 493.5 L1076.7 493.1 L1077.9 492.4 L1079.1 491.8 L1080.3 492 L1081.5 491.8 L1083 489.4 L1084.6 486.8 L1086.2 483.1 L1088.1 485 L1090 477.2 L1091.7 484.1 L1093.8 479.9 L1095.5 483.6 L1097.4 479 L1098.8 479.5 L1100 484 L1101.2 489.5 L1103.1 492.3 L1104.8 491.8 L1106.4 488.2 L1108.1 487.7 L1109.5 496.4 L1110.9 496.5 L1112.2 495.4 L1113.5 495.4 L1114.9 494.9 L1116.2 494.4 L1117.5 493.7 L1118.9 492.7 L1120.2 491.8 L1121.5 490.4 L1122.8 490.1 L1124.1 488.6 L1125.4 487.7 L1127 487.8 L1128.5 488.2 L1130.2 489.7 L1131.8 490.9 L1133.4 489.2 L1134.9 487.7 L1136.1 489.5 L1137.3 490.4 L1139.2 486.8 L1141.1 491.3 L1142.8 487.7 L1144.9 498.2 L1146.2 498.4 L1147.5 498 L1148.8 497.3 L1150.1 497.3 L1151.4 497.2 L1152.7 496.8 L1154.2 493.8 L1155.6 490.9 L1156.8 486.6 L1158 482.2 L1159.3 479.9 L1160.6 477.2 L1162.7 483.1 L1164 485.6 L1165.3 488.6 L1166.8 489.5 L1168.2 490.9 L1169.4 490 L1170.6 488.6 L1171.8 490.1 L1172.9 491.8 L1174.8 489.1 L1176.5 493.2 L1177.7 491.1 L1178.9 489.1 L1180.1 495.9 L1182 498.2 L1183.3 497.2 L1184.6 496.8 L1185.9 496.7 L1187.2 495.9 L1188.4 494.5 L1189.6 494.5 L1190.8 493.3 L1191.9 492.3 L1193.4 488.3 L1194.8 485 L1196.7 482.7 L1198.6 488.6 L1199.8 489.6 L1201 489.8 L1202.2 490.4 L1203.6 489.3 L1205 487.2 L1206.2 487.5 L1207.4 488.2 L1208.8 484.7 L1210.2 481.8 L1212.1 483.6 L1214 483.6 L1215.7 495.9 L1217.3 495.1 L1218.8 494.5 L1220 493.8 L1221.2 494.1 L1222.4 493.3 L1223.5 493.2 L1224.9 491.7 L1226.2 490.3 L1227.6 489.1 L1228.8 486.1 L1230 483.1 L1231.1 483.5 L1232.3 484.5 L1234.2 483.1 L1235.9 486.3 L1237.1 488.1 L1238.3 490.9 L1239.5 490.5 L1240.7 489.8 L1241.8 489.5 L1243 489.4 L1244.2 488.1 L1245.4 487.7 L1247.3 489.5 L1249.4 485 L1251.3 496.8 L1252.5 496.9 L1253.7 497.3 L1254.9 496.2 L1256.1 495.9 L1257.3 495.9 L1258.5 495.3 L1259.7 494.4 L1260.8 494.1 L1262.3 492.9 L1263.7 490.8 L1265.1 489.1 L1266.6 488.5 L1268 487.2 L1269.3 489 L1270.6 490 L1272.3 491.6 L1273.9 492.3 L1275.1 491.5 L1276.3 491.7 L1277.5 490.9 L1278.7 489.1 L1279.9 486.8 L1281.8 492.3 L1283.7 485.9 L1285.3 486.3 L1287 495.4 L1288.4 497.2 L1289.8 498.6 L1291.3 497.6 L1292.8 497.9 L1294.3 496.8 L1296 495 L1297.7 493.2 L1298.9 490.8 L1300 488.2 L1301.2 486.3 L1302.8 484.2 L1304.3 482.7 L1306.5 488.2 L1308 489.1 L1309.6 490.9 L1311.1 490 L1312.6 488.6 L1314.1 489.6 L1315.5 490.4 L1317 490.1 L1318.6 489.5 L1320.7 484.1 L1322.6 490.9 L1323.8 491.4 L1325 492.2 L1326.2 493.6 L1327.4 493.7 L1328.6 493.4 L1329.7 492.7 L1330.9 492.8 L1332.1 492.7 L1333.3 492.3 L1334.5 489.4 L1335.7 486.4 L1336.9 483.6 L1338.4 480 L1340 475.8 L1341.9 484.1 L1343.2 486.9 L1344.5 488.6 L1346 487.1 L1347.6 485.4 L1349.1 484.4 L1350.7 483.1 L1352.1 489.1 L1354 484.5 L1355.9 488.6 L1357.3 479.9 L1358.7 493.6 L1360.1 493.4 L1361.5 492.8 L1362.9 492.9 L1364.2 492.9 L1365.6 492.7 L1367.3 491.7 L1368.9 490.9 L1370.5 484.1 L1372 477.7 L1373.2 474.8 L1374.4 470.6 L1375.6 467.6 L1376.8 472.8 L1378 478.6 L1379.4 481.6 L1380.8 485.4 L1382.3 481 L1383.7 477.2 L1385 481 L1386.3 484.5 L1388 479.9 L1389.9 485 L1391 484.2 L1392.2 483.1 L1393.9 491.8 L1395.1 492.7 L1396.3 492.6 L1397.5 493.2 L1399 492.7 L1400.5 491.3 L1402 491.6 L1403.4 490.9" fill="none" stroke="#409eff" stroke-width="2" stroke-linejoin="round" transform="translate(0 -.8)"/><path d="M1033.5 490 L1035.1 481.8 L1036.8 489.5 L1038.7 490.9 L1039.9 490.7 L1041.1 490.5 L1042.3 489.6 L1043.5 489.8 L1044.6 488.9 L1045.8 488.6 L1047.1 488 L1048.4 487.6 L1049.7 486.4 L1051 486.2 L1052.2 485 L1053.6 484.8 L1054.9 485 L1056.2 484.7 L1057.5 484.1 L1059 485 L1060.6 485.9 L1062.7 480.4 L1064.4 486.3 L1066.5 479.9 L1068.4 487.2 L1070.3 480.9 L1071.5 482.7 L1073.2 493.6 L1074.3 493 L1075.5 493.5 L1076.7 493.1 L1077.9 492.4 L1079.1 491.8 L1080.3 492 L1081.5 491.8 L1083 489.4 L1084.6 486.8 L1086.2 483.1 L1088.1 485 L1090 477.2 L1091.7 484.1 L1093.8 479.9 L1095.5 483.6 L1097.4 479 L1098.8 479.5 L1100 484 L1101.2 489.5 L1103.1 492.3 L1104.8 491.8 L1106.4 488.2 L1108.1 487.7 L1109.5 496.4 L1110.9 496.5 L1112.2 495.4 L1113.5 495.4 L1114.9 494.9 L1116.2 494.4 L1117.5 493.7 L1118.9 492.7 L1120.2 491.8 L1121.5 490.4 L1122.8 490.1 L1124.1 488.6 L1125.4 487.7 L1127 487.8 L1128.5 488.2 L1130.2 489.7 L1131.8 490.9 L1133.4 489.2 L1134.9 487.7 L1136.1 489.5 L1137.3 490.4 L1139.2 486.8 L1141.1 491.3 L1142.8 487.7 L1144.9 498.2 L1146.2 498.4 L1147.5 498 L1148.8 497.3 L1150.1 497.3 L1151.4 497.2 L1152.7 496.8 L1154.2 493.8 L1155.6 490.9 L1156.8 486.6 L1158 482.2 L1159.3 479.9 L1160.6 477.2 L1162.7 483.1 L1164 485.6 L1165.3 488.6 L1166.8 489.5 L1168.2 490.9 L1169.4 490 L1170.6 488.6 L1171.8 490.1 L1172.9 491.8 L1174.8 489.1 L1176.5 493.2 L1177.7 491.1 L1178.9 489.1 L1180.1 495.9 L1182 498.2 L1183.3 497.2 L1184.6 496.8 L1185.9 496.7 L1187.2 495.9 L1188.4 494.5 L1189.6 494.5 L1190.8 493.3 L1191.9 492.3 L1193.4 488.3 L1194.8 485 L1196.7 482.7 L1198.6 488.6 L1199.8 489.6 L1201 489.8 L1202.2 490.4 L1203.6 489.3 L1205 487.2 L1206.2 487.5 L1207.4 488.2 L1208.8 484.7 L1210.2 481.8 L1212.1 483.6 L1214 483.6 L1215.7 495.9 L1217.3 495.1 L1218.8 494.5 L1220 493.8 L1221.2 494.1 L1222.4 493.3 L1223.5 493.2 L1224.9 491.7 L1226.2 490.3 L1227.6 489.1 L1228.8 486.1 L1230 483.1 L1231.1 483.5 L1232.3 484.5 L1234.2 483.1 L1235.9 486.3 L1237.1 488.1 L1238.3 490.9 L1239.5 490.5 L1240.7 489.8 L1241.8 489.5 L1243 489.4 L1244.2 488.1 L1245.4 487.7 L1247.3 489.5 L1249.4 485 L1251.3 496.8 L1252.5 496.9 L1253.7 497.3 L1254.9 496.2 L1256.1 495.9 L1257.3 495.9 L1258.5 495.3 L1259.7 494.4 L1260.8 494.1 L1262.3 492.9 L1263.7 490.8 L1265.1 489.1 L1266.6 488.5 L1268 487.2 L1269.3 489 L1270.6 490 L1272.3 491.6 L1273.9 492.3 L1275.1 491.5 L1276.3 491.7 L1277.5 490.9 L1278.7 489.1 L1279.9 486.8 L1281.8 492.3 L1283.7 485.9 L1285.3 486.3 L1287 495.4 L1288.4 497.2 L1289.8 498.6 L1291.3 497.6 L1292.8 497.9 L1294.3 496.8 L1296 495 L1297.7 493.2 L1298.9 490.8 L1300 488.2 L1301.2 486.3 L1302.8 484.2 L1304.3 482.7 L1306.5 488.2 L1308 489.1 L1309.6 490.9 L1311.1 490 L1312.6 488.6 L1314.1 489.6 L1315.5 490.4 L1317 490.1 L1318.6 489.5 L1320.7 484.1 L1322.6 490.9 L1323.8 491.4 L1325 492.2 L1326.2 493.6 L1327.4 493.7 L1328.6 493.4 L1329.7 492.7 L1330.9 492.8 L1332.1 492.7 L1333.3 492.3 L1334.5 489.4 L1335.7 486.4 L1336.9 483.6 L1338.4 480 L1340 475.8 L1341.9 484.1 L1343.2 486.9 L1344.5 488.6 L1346 487.1 L1347.6 485.4 L1349.1 484.4 L1350.7 483.1 L1352.1 489.1 L1354 484.5 L1355.9 488.6 L1357.3 479.9 L1358.7 493.6 L1360.1 493.4 L1361.5 492.8 L1362.9 492.9 L1364.2 492.9 L1365.6 492.7 L1367.3 491.7 L1368.9 490.9 L1370.5 484.1 L1372 477.7 L1373.2 474.8 L1374.4 470.6 L1375.6 467.6 L1376.8 472.8 L1378 478.6 L1379.4 481.6 L1380.8 485.4 L1382.3 481 L1383.7 477.2 L1385 481 L1386.3 484.5 L1388 479.9 L1389.9 485 L1391 484.2 L1392.2 483.1 L1393.9 491.8 L1395.1 492.7 L1396.3 492.6 L1397.5 493.2 L1399 492.7 L1400.5 491.3 L1402 491.6 L1403.4 490.9" fill="none" stroke="#62c03a" stroke-width="2.100" stroke-linejoin="round" stroke-linecap="round"/><g fill="#fff" stroke="#62c03a" stroke-width="1.600"><circle cx="1033.5" cy="489.9" r="2.400"/><circle cx="1057.3" cy="484.2" r="2.400"/><circle cx="1081" cy="491.9" r="2.400"/><circle cx="1104.8" cy="491.7" r="2.400"/><circle cx="1128.5" cy="488.2" r="2.400"/><circle cx="1152.3" cy="497" r="2.400"/><circle cx="1176.1" cy="492.1" r="2.400"/><circle cx="1199.8" cy="489.6" r="2.400"/><circle cx="1223.6" cy="493.1" r="2.400"/><circle cx="1247.3" cy="489.4" r="2.400"/><circle cx="1271.1" cy="490.5" r="2.400"/><circle cx="1294.9" cy="496.3" r="2.400"/><circle cx="1318.6" cy="489.4" r="2.400"/><circle cx="1342.4" cy="485.2" r="2.400"/><circle cx="1366.1" cy="492.4" r="2.400"/><circle cx="1389.9" cy="484.9" r="2.400"/></g></g></svg></div>
<div class="a card" style="left:1433px;top:428px;width:430px;height:170px"><div class="a ch" style="height:27px"></div><svg class="a" style="left:11px;top:6px" width="11" height="13" viewBox="0 0 11 13" fill="none" stroke="url(#pg)" stroke-width="1.400" stroke-linejoin="round"><path d="M5.500 1 C8.500 4 10 5.800 10 7.800 a4.500 4.500 0 0 1 -9 0 C1 5.800 2.500 4 5.500 1 z"/><path d="M5.700 5.200 l-1.700 2.800 h3 l-1.700 2.600" stroke-width="1.100"/></svg><div class="a ct" style="left:25px;top:6.500px;font-size:12px">智慧用水-富鼎电子科技（嘉善）有限公司</div><svg class="a" style="left:-1px;top:-1px" width="430" height="170" viewBox="1433 428 430 170" font-family="Liberation Sans, sans-serif"><defs><linearGradient id="wg" x1="0" y1="0" x2="0" y2="1"><stop offset="0" stop-color="#409eff" stop-opacity=".22"/><stop offset="1" stop-color="#409eff" stop-opacity=".08"/></linearGradient></defs><path d="M1513.6 531.5 H1836.3" stroke="#e0e6f1" stroke-width="1"/><path d="M1513.6 523.5 H1836.3" stroke="#e0e6f1" stroke-width="1"/><path d="M1513.6 514.5 H1836.3" stroke="#e0e6f1" stroke-width="1"/><path d="M1513.6 506.5 H1836.3" stroke="#e0e6f1" stroke-width="1"/><path d="M1513.6 497.5 H1836.3" stroke="#e0e6f1" stroke-width="1"/><path d="M1513.6 489.5 H1836.3" stroke="#e0e6f1" stroke-width="1"/><path d="M1513.6 481.5 H1836.3" stroke="#e0e6f1" stroke-width="1"/><path d="M1513.6 472.5 H1836.3" stroke="#e0e6f1" stroke-width="1"/><path d="M1513.6 514.3 L1516.7 514.8 L1519.3 515 L1520.5 490.8 L1525 491.5 L1537.4 492 L1561.4 492.2 L1585.1 492 L1596.3 491.5 L1609.4 491 L1620.1 490.3 L1633.1 491 L1643.1 490.8 L1643.8 503.6 L1650.5 503.6 L1651.7 478.7 L1657.4 478.7 L1667.6 479.4 L1681.1 479.4 L1691.3 478.2 L1704.9 478.7 L1707.5 479.4 L1709.6 483 L1715.8 483.2 L1717.5 485.1 L1728.9 485.3 L1738.9 485.1 L1748.4 483.7 L1749.6 502.4 L1752.6 502.4 L1763.6 502.9 L1764.8 483.2 L1776.4 483 L1786.4 482.5 L1800.2 482.7 L1801.1 484.4 L1810.1 484.4 L1824.4 484.1 L1835.1 484.4 L1835.1 539.3 L1513.6 539.3 Z" fill="url(#wg)"/><path d="M1513.6 539.5 H1836.8" stroke="#6e7079" stroke-width="1"/><g stroke="#6e7079" stroke-width="1"><path d="M1514.5 539.5 v4.5"/><path d="M1538.5 539.5 v4.5"/><path d="M1561.5 539.5 v4.5"/><path d="M1585.5 539.5 v4.5"/><path d="M1609.5 539.5 v4.5"/><path d="M1633.5 539.5 v4.5"/><path d="M1657.5 539.5 v4.5"/><path d="M1681.5 539.5 v4.5"/><path d="M1705.5 539.5 v4.5"/><path d="M1729.5 539.5 v4.5"/><path d="M1753.5 539.5 v4.5"/><path d="M1776.5 539.5 v4.5"/><path d="M1800.5 539.5 v4.5"/><path d="M1824.5 539.5 v4.5"/></g><g font-size="9.800" fill="#6e7079" text-anchor="end"><text transform="translate(1505.300 533) scale(.935 1)">0.1 MPa</text><text transform="translate(1505.300 525) scale(.935 1)">0.2 MPa</text><text transform="translate(1505.300 517) scale(.935 1)">0.3 MPa</text><text transform="translate(1505.300 508) scale(.935 1)">0.4 MPa</text><text transform="translate(1505.300 500) scale(.935 1)">0.5 MPa</text><text transform="translate(1505.300 491) scale(.935 1)">0.6 MPa</text><text transform="translate(1505.300 483) scale(.935 1)">0.7 MPa</text></g><g font-size="9.6" fill="#6e7079" text-anchor="end" letter-spacing="-.05"><text transform="translate(1514.3 549.9) rotate(-30)">01/16 01:20</text><text transform="translate(1538.2 549.9) rotate(-30)">01/10 05:20</text><text transform="translate(1562.1 549.9) rotate(-30)">01/04 01:20</text><text transform="translate(1586 549.9) rotate(-30)">12/28 23:46</text><text transform="translate(1609.9 549.9) rotate(-30)">12/22 19:46</text><text transform="translate(1633.8 549.9) rotate(-30)">12/16 18:13</text><text transform="translate(1657.7 549.9) rotate(-30)">12/10 22:13</text><text transform="translate(1681.6 549.9) rotate(-30)">12/04 18:13</text><text transform="translate(1705.5 549.9) rotate(-30)">11/28 17:58</text><text transform="translate(1729.4 549.9) rotate(-30)">11/22 17:58</text><text transform="translate(1753.3 549.9) rotate(-30)">11/16 21:25</text><text transform="translate(1777.2 549.9) rotate(-30)">11/10 21:24</text><text transform="translate(1801.1 549.9) rotate(-30)">11/04 17:24</text><text transform="translate(1825 549.9) rotate(-30)">10/29 14:10</text></g><path d="M1513.6 514.3 L1516.7 514.8 L1519.3 515 L1520.5 490.8 L1525 491.5 L1537.4 492 L1561.4 492.2 L1585.1 492 L1596.3 491.5 L1609.4 491 L1620.1 490.3 L1633.1 491 L1643.1 490.8 L1643.8 503.6 L1650.5 503.6 L1651.7 478.7 L1657.4 478.7 L1667.6 479.4 L1681.1 479.4 L1691.3 478.2 L1704.9 478.7 L1707.5 479.4 L1709.6 483 L1715.8 483.2 L1717.5 485.1 L1728.9 485.3 L1738.9 485.1 L1748.4 483.7 L1749.6 502.4 L1752.6 502.4 L1763.6 502.9 L1764.8 483.2 L1776.4 483 L1786.4 482.5 L1800.2 482.7 L1801.1 484.4 L1810.1 484.4 L1824.4 484.1 L1835.1 484.4" fill="none" stroke="#409eff" stroke-width="2" stroke-linejoin="round"/><g fill="#fff" stroke="#409eff" stroke-width="1.500"><circle cx="1513.6" cy="514.3" r="2.400"/><circle cx="1537.5" cy="492" r="2.400"/><circle cx="1561.4" cy="492.2" r="2.400"/><circle cx="1585.3" cy="492" r="2.400"/><circle cx="1609.2" cy="491" r="2.400"/><circle cx="1633.1" cy="491" r="2.400"/><circle cx="1657" cy="478.7" r="2.400"/><circle cx="1680.9" cy="479.4" r="2.400"/><circle cx="1704.8" cy="478.7" r="2.400"/><circle cx="1728.7" cy="485.3" r="2.400"/><circle cx="1752.6" cy="502.4" r="2.400"/><circle cx="1776.5" cy="483" r="2.400"/><circle cx="1800.4" cy="483.1" r="2.400"/><circle cx="1824.3" cy="484.1" r="2.400"/></g></svg></div>
<!-- card: 最新告警列表 -->
<div class="a card" style="left:110px;top:608px;width:1756px;height:308px">
<div class="a ch" style="height:45px"></div>
<svg class="a" style="left:16px;top:15px" width="12" height="14" viewBox="0 0 12 14" fill="none" stroke="url(#pg)" stroke-width="1.900"><path d="M1.500 10.200 v-4.600 a4.500 4.500 0 0 1 9 0 v4.600 z" stroke-linejoin="round"/><path d="M4.600 12.700 h2.800" stroke="#9a4cf5" stroke-width="1.700" stroke-linecap="round"/></svg>
<div class="a ct" style="left:32px;top:15px;font-size:14px">最新告警列表</div>
<div class="a" style="left:1550px;top:10px;width:189px;height:24px;border:1px solid #dcdfe6;border-radius:4px;background:#fff;font-size:12px;color:#44474e;line-height:22px;text-align:center">
<div class="a" style="left:-1px;top:-1px;width:48px;height:24px;background:#4e88f3;color:#fff;border-radius:4px 0 0 4px;line-height:24px;font-weight:700">告警</div>
<div class="a" style="left:47px;top:0;width:47px;height:22px;border-right:1px solid #dcdfe6">故障</div>
<div class="a" style="left:94px;top:0;width:47px;height:22px;border-right:1px solid #dcdfe6">离线</div>
<div class="a" style="left:141px;top:0;width:47px;height:22px">其他</div>
</div>
<!-- P1 -->
<div class="a pn" style="left:5px;top:50px;width:573px">
<div class="a ph"><div class="a ic" style="background:#fbe5e5"></div>
<svg class="a" style="left:18px;top:13px" width="12" height="13" viewBox="0 0 12 13" fill="none" stroke="#f9504f" stroke-width="1.800"><path d="M2.600 11 v-3.600 a3.400 3.400 0 0 1 6.800 0 v3.600 M.6 11.600 h10.800 M6 .4 v2 M1.200 2 l1.500 1.500 M10.800 2 l-1.500 1.500"/></svg>
<div class="a t">告警列表</div>
<div class="a sel" style="left:148px">告警类型<svg class="a" style="left:95px;top:8px" width="10" height="6" viewBox="0 0 10 6" fill="none" stroke="#a8abb2" stroke-width="1.100"><path d="M.5 .5 l4.500 4.500 l4.500-4.500"/></svg></div>
<div class="a sel" style="left:268px">告警单位<svg class="a" style="left:95px;top:8px" width="10" height="6" viewBox="0 0 10 6" fill="none" stroke="#a8abb2" stroke-width="1.100"><path d="M.5 .5 l4.500 4.500 l4.500-4.500"/></svg></div>
<div class="a sel" style="left:388px">告警状态<svg class="a" style="left:95px;top:8px" width="10" height="6" viewBox="0 0 10 6" fill="none" stroke="#a8abb2" stroke-width="1.100"><path d="M.5 .5 l4.500 4.500 l4.500-4.500"/></svg></div>
<div class="a" style="left:508px;top:8px;width:24px;height:24px;border-radius:12px;background:#4e88f3"><svg class="a" style="left:7px;top:7px" width="10" height="10" viewBox="0 0 12 12" fill="none" stroke="#fff" stroke-width="1.700"><path d="M10.300 4.200 A4.600 4.600 0 0 0 1.600 4.600 M1.700 7.800 A4.600 4.600 0 0 0 10.400 7.400"/><path d="M10.900 2.200 v2.400 h-2.400 M1.100 9.800 v-2.400 h2.400" stroke-width="1.300"/></svg></div>
<div class="a" style="left:537px;top:8px;width:24px;height:24px;border-radius:12px;background:#e6a23c"><svg class="a" style="left:8.500px;top:8.500px" width="7" height="7" viewBox="0 0 7 7" fill="none" stroke="#fff" stroke-width="1.300"><path d="M.7 .7 l5.600 5.600 M6.300 .7 l-5.600 5.600"/></svg></div>
</div>
<div class="a" style="left:0;top:40px;width:571px;height:209px">
<div class="tc th" style="left:0;top:0;width:100px;text-align:center">告警类型</div><div class="tc th" style="left:100px;top:0;width:211px;padding-left:12px">所属单位</div><div class="tc th" style="left:311px;top:0;width:160px;padding-left:12px">告警时间</div><div class="tc th" style="left:471px;top:0;width:100px;text-align:center;border-right:0">处理状态</div>
<div class="tc" style="left:0;top:40px;width:100px;text-align:center"><span class="tag" style="background:#f9504f;width:40px;padding:0">火警</span></div><div class="tc" style="left:100px;top:40px;width:211px;padding-left:12px;color:#4e88f3">南昌凯**********************…</div><div class="tc" style="left:311px;top:40px;width:160px;padding-left:12px">2026-01-16 10:08:09</div><div class="tc" style="left:471px;top:40px;width:100px;text-align:center;padding-left:1px;border-right:0"><span class="tag" style="background:#f9504f;width:52px;padding:0">处理中</span></div>
<div class="tc" style="left:0;top:80px;width:100px;text-align:center;background:#fafafa"><span class="tag" style="background:#f9504f;width:40px;padding:0">火警</span></div><div class="tc" style="left:100px;top:80px;width:211px;padding-left:12px;color:#4e88f3;background:#fafafa">汇丰大*</div><div class="tc" style="left:311px;top:80px;width:160px;padding-left:12px;background:#fafafa">2026-01-16 10:08:09</div><div class="tc" style="left:471px;top:80px;width:100px;text-align:center;padding-left:1px;border-right:0;background:#fafafa"><span class="tag" style="background:#13ce66;width:40px;padding:0">测试</span></div>
<div class="tc" style="left:0;top:120px;width:100px;text-align:center"><span class="tag" style="background:#f9504f;width:40px;padding:0">火警</span></div><div class="tc" style="left:100px;top:120px;width:211px;padding-left:12px;color:#4e88f3">世茂**************************…</div><div class="tc" style="left:311px;top:120px;width:160px;padding-left:12px">2026-01-16 10:08:05</div><div class="tc" style="left:471px;top:120px;width:100px;text-align:center;padding-left:1px;border-right:0"><span class="tag" style="background:#f9504f;width:52px;padding:0">处理中</span></div>
<div class="tc" style="left:0;top:160px;width:100px;text-align:center;background:#fafafa"><span class="tag" style="background:#f9504f;width:40px;padding:0">火警</span></div><div class="tc" style="left:100px;top:160px;width:211px;padding-left:12px;color:#4e88f3;background:#fafafa">杭州山***********************…</div><div class="tc" style="left:311px;top:160px;width:160px;padding-left:12px;background:#fafafa">2026-01-16 10:08:01</div><div class="tc" style="left:471px;top:160px;width:100px;text-align:center;padding-left:1px;border-right:0;background:#fafafa"><span class="tag" style="background:#4e88f3;width:52px;padding:0">已通知</span></div>
<div class="tc" style="left:0;top:200px;width:100px;text-align:center"></div><div class="tc" style="left:100px;top:200px;width:211px;padding-left:12px;color:#4e88f3"></div><div class="tc" style="left:311px;top:200px;width:160px;padding-left:12px"></div><div class="tc" style="left:471px;top:200px;width:100px;text-align:center;padding-left:1px;border-right:0"></div>

</div>
</div>
<!-- P2 -->
<div class="a pn" style="left:583px;top:50px;width:288px">
<div class="a ph"><div class="a ic" style="background:#e1ecfa"></div>
<svg class="a" style="left:18px;top:14px" width="12" height="12" viewBox="0 0 12 12" fill="none" stroke="#409eff" stroke-width="1.800"><circle cx="6" cy="6" r="5.100"/><path d="M6 2.800 v3.600 h2.800" stroke-width="1.500"/></svg>
<div class="a t">处理进度</div>
<div class="a" style="left:187px;top:8px;width:89px;height:24px;border:1px solid #a4c2f9;border-radius:4px;background:#e8effd;color:#4e88f3;font-size:12px;line-height:22px;padding-left:11px">处理操作<svg class="a" style="left:67px;top:9px" width="7" height="5" viewBox="0 0 7 5" fill="none" stroke="#4e88f3" stroke-width="1.100"><path d="M.6 .8 l2.900 2.900 l2.900-2.900"/></svg></div>
</div>
<div class="a" style="left:24px;top:63px;width:2px;height:44px;background:#e4e7ed"></div>
<div class="a" style="left:19px;top:50px;width:12px;height:12px;border-radius:6px;border:2px solid #4e88f3;background:#fff"></div>
<div class="a" style="left:12px;top:99px;width:26px;height:26px;border-radius:13px;background:#fde8e8"></div>
<div class="a" style="left:18.800px;top:105.800px;width:12.400px;height:12.400px;border-radius:7px;background:#f9504f"></div>
<div class="a" style="left:48px;top:48px;font-size:14px;color:#5a5e66;white-space:nowrap">待处理</div>
<div class="a" style="left:48px;top:71px;font-size:12px;color:#909399;white-space:nowrap">2026-01-16 10:08:09</div>
<div class="a" style="left:48px;top:104px;font-size:14px;color:#5a5e66;white-space:nowrap">处理中 开始云***</div>
<div class="a" style="left:48px;top:128px;font-size:12px;color:#909399;white-space:nowrap">2026-01-16 10:08:10</div>
</div>
<!-- P3 -->
<div class="a pn" style="left:876px;top:50px;width:288px">
<div class="a ph"><div class="a ic" style="background:#e5f2e0"></div>
<svg class="a" style="left:18px;top:13px" width="12" height="13" viewBox="0 0 12 13" fill="none" stroke="#67c23a" stroke-width="1.800"><circle cx="6" cy="4" r="3"/><path d="M1.200 12.600 a4.800 5.200 0 0 1 9.600 0"/></svg>
<div class="a t">联系人员</div>
<div class="a" style="left:208px;top:8px;width:68px;height:24px;border:1px solid #a4c2f9;border-radius:4px;background:#e8effd;color:#4e88f3;font-size:12px;line-height:22px;padding-left:26px;white-space:nowrap;letter-spacing:.6px">新 增<svg class="a" style="left:12px;top:7px" width="9" height="9" viewBox="0 0 9 9" fill="none" stroke="#4e88f3" stroke-width="1.100"><path d="M4.500 0 v9 M0 4.500 h9"/></svg></div>
</div>
<div class="a" style="left:1px;top:40px;width:285px;height:209px">
<div class="tc th" style="left:0;top:0;width:142px;padding-left:11px">姓名</div><div class="tc th" style="left:142px;top:0;width:143px;padding-left:12px;border-right:0">联系电话</div>
<div class="tc" style="left:0;top:40px;width:142px;padding-left:11px">消控室</div><div class="tc" style="left:142px;top:40px;width:143px;padding-left:12px;border-right:0">***</div>
<div class="tc" style="left:0;top:80px;width:142px;padding-left:11px;background:#fafafa">肖莉华</div><div class="tc" style="left:142px;top:80px;width:143px;padding-left:12px;border-right:0;background:#fafafa">***</div>
<div class="tc" style="left:0;top:120px;width:142px;padding-left:11px">戴咏梅</div><div class="tc" style="left:142px;top:120px;width:143px;padding-left:12px;border-right:0">***</div>
</div>
</div>
<!-- P4 -->
<div class="a pn" style="left:1169px;top:50px;width:287px">
<div class="a ph"><div class="a ic" style="background:#f9efe1"></div>
<svg class="a" style="left:18px;top:13px" width="12" height="14" viewBox="0 0 12 14" fill="none" stroke="#e6a23c" stroke-width="1.600"><path d="M6 13 C2.800 9.800 1 7.600 1 5.600 a5 5 0 0 1 10 0 C11 7.600 9.200 9.800 6 13 z" stroke-linejoin="round"/><circle cx="6" cy="5.600" r="2"/></svg>
<div class="a t">告警点位</div>
</div>
<div class="a" style="left:1px;top:40px;width:285px;height:209px;font-size:12px">
<div class="tc th" style="left:0;top:0;width:99px;height:34px;line-height:34px;text-align:center;font-size:12px">点位名称</div><div class="tc th" style="left:99px;top:0;width:100px;height:34px;line-height:34px;text-align:center;font-size:12px">所在位置</div><div class="tc th" style="left:199px;top:0;width:100px;height:34px;line-height:34px;text-align:center;font-size:12px">点位编号</div>
<div class="tc" style="left:0;top:34px;width:99px;height:53px;line-height:54px;text-align:center;font-size:12px">烟感</div><div class="tc" style="left:99px;top:34px;width:100px;height:53px"></div><div class="tc" style="left:199px;top:34px;width:100px;height:53px;line-height:23px;text-align:center;font-size:12px;white-space:normal;padding:3.200px 10px 0 10px">000-001-014-100</div>
</div>
</div>
<!-- P5 -->
<div class="a pn" style="left:1461px;top:50px;width:288px">
<div class="a ph"><div class="a ic" style="background:#ece3f5"></div>
<svg class="a" style="left:18px;top:14px" width="13" height="12" viewBox="0 0 13 12" fill="none" stroke="#8e3bb5" stroke-width="1.800"><rect x=".8" y=".8" width="11.400" height="10.400" rx=".5"/><path d="M1 10 l3.600-3.800 l2.400 2.400 l1.600-1.600 l3.400 3.400" stroke-width="1.200"/><circle cx="8.600" cy="3.800" r=".9" fill="#8e3bb5" stroke="none"/></svg>
<div class="a t">告警平面图</div>
</div>
<div class="a" style="left:10px;top:51px;width:32px;height:188px;border:1px solid #e6e8ec;border-radius:4px;background:#f8f8f9;box-shadow:0 1px 3px rgba(0,0,0,.05);font-size:12px;color:#85888f;text-align:center">
<svg class="a" style="left:13px;top:10px" width="4" height="3" viewBox="0 0 4 3" fill="none" stroke="#c0c4cc" stroke-width=".8"><path d="M.3 2.400 l1.700-1.700 l1.700 1.700"/></svg>
<div class="a" style="left:2px;top:19.500px;width:26px;height:26px;border-radius:2px;background:#5aabff;color:#fff;line-height:26px">-2</div>
<div class="a" style="left:0;top:57px;width:30px">-1</div>
<div class="a" style="left:0;top:87px;width:30px">1</div>
<div class="a" style="left:0;top:117px;width:30px">2</div>
<div class="a" style="left:0;top:147px;width:30px">3</div>
<svg class="a" style="left:13px;top:173px" width="4" height="3" viewBox="0 0 4 3" fill="#a8abb2"><path d="M0 .3 h4 l-2 2.200 z"/></svg>
</div>
<svg class="a" style="left:112.650px;top:98px" width="61.300" height="61.300" viewBox="120 100 470 470">
<defs><linearGradient id="eg1" x1="0" y1="0" x2="1" y2="1"><stop offset="0" stop-color="#eff0f3"/><stop offset="1" stop-color="#e5e7eb"/></linearGradient><linearGradient id="eg2" x1="0" y1="0" x2="1" y2="1"><stop offset="0" stop-color="#f8f8fa"/><stop offset="1" stop-color="#e9ebee"/></linearGradient></defs>
<ellipse cx="352" cy="543" rx="228" ry="22" fill="#f5f6f8"/>
<path d="M215 110 L310 150 L225 322 L128 295 Z" fill="#f4f5f7"/>
<path d="M310 150 L497 240 L458 328 L225 322 Z" fill="url(#eg1)"/>
<path d="M215 110 L395 160 L497 240 L310 150 Z" fill="#f8f9fa"/>
<path d="M200 330 H435 V535 H200 Z" fill="url(#eg2)"/>
<path d="M435 335 H530 V535 H435 Z" fill="#e3e5e9"/>
<path d="M135 405 L200 335 V405 Z" fill="#eceef1"/>
<path d="M435 330 H530 L580 405 H475 Z" fill="#f5f6f8"/>
<path d="M435 335 L475 405 L455 430 L435 400 Z" fill="#dcdfe4"/>
</svg>
<div class="a" style="left:108px;top:180px;font-size:14px;color:#909399;white-space:nowrap">暂无平面图</div>
</div>
</div>

</body>
</html>
